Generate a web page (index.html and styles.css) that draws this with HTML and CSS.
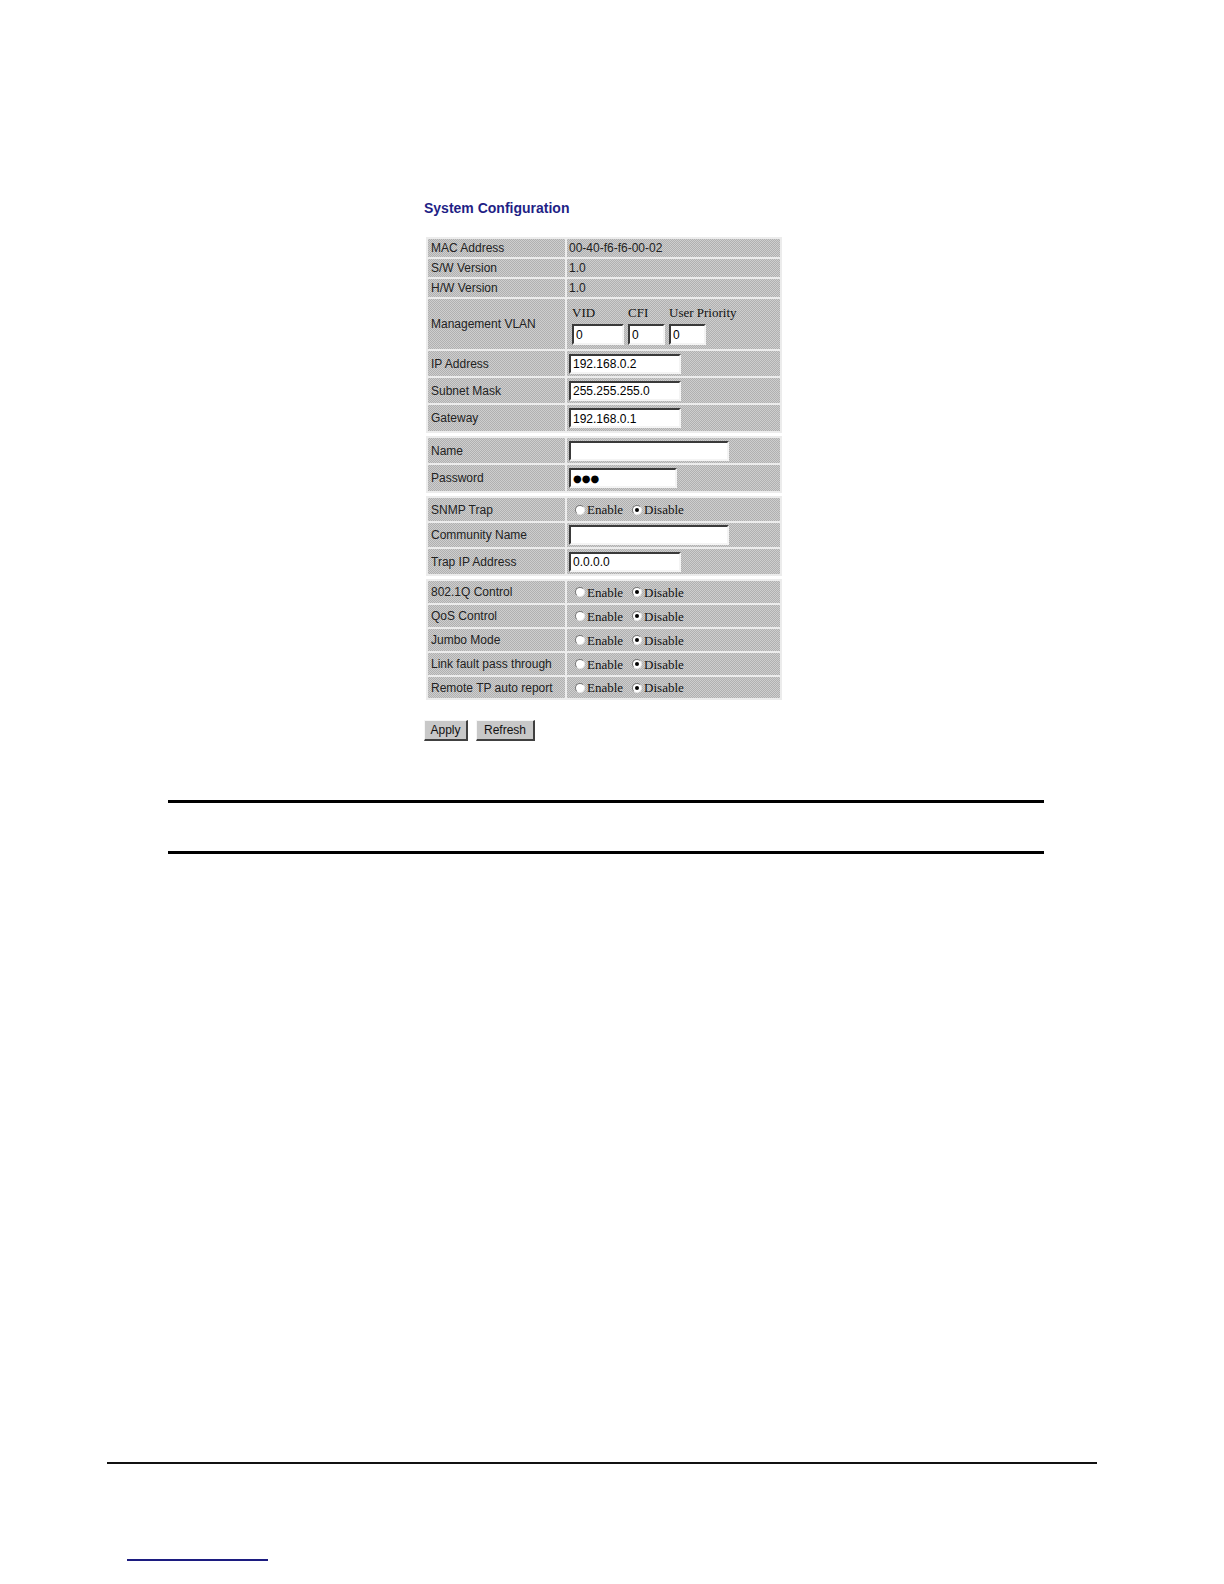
FILE: index.html
```html
<!DOCTYPE html>
<html>
<head>
<meta charset="utf-8">
<title>System Configuration</title>
<link rel="stylesheet" href="styles.css">
</head>
<body>
<div class="page">
  <div class="config">
    <h1 class="title">System Configuration</h1>
    <div class="tables">
      <table class="cfg">
        <tr class="r18"><td class="lab">MAC Address</td><td class="val">00-40-f6-f6-00-02</td></tr>
        <tr class="r18"><td class="lab">S/W Version</td><td class="val">1.0</td></tr>
        <tr class="r18"><td class="lab">H/W Version</td><td class="val">1.0</td></tr>
        <tr class="r50"><td class="lab">Management VLAN</td>
          <td class="val">
            <div class="vlan">
              <div class="vf vf-vid"><span class="serif">VID</span><input class="box" type="text" value="0"></div>
              <div class="vf vf-sm"><span class="serif">CFI</span><input class="box" type="text" value="0"></div>
              <div class="vf vf-sm"><span class="serif">User Priority</span><input class="box" type="text" value="0"></div>
            </div>
          </td></tr>
        <tr class="r25"><td class="lab">IP Address</td><td class="val"><input class="box w112" type="text" value="192.168.0.2"></td></tr>
        <tr class="r25"><td class="lab">Subnet Mask</td><td class="val"><input class="box w112" type="text" value="255.255.255.0"></td></tr>
        <tr class="r26"><td class="lab">Gateway</td><td class="val"><input class="box w112" type="text" value="192.168.0.1"></td></tr>
      </table>
      <table class="cfg">
        <tr class="r25"><td class="lab">Name</td><td class="val"><input class="box w160" type="text" value=""></td></tr>
        <tr class="r26"><td class="lab">Password</td><td class="val"><span class="box w108 pw">&#9679;&#9679;&#9679;</span></td></tr>
      </table>
      <table class="cfg">
        <tr class="r23"><td class="lab">SNMP Trap</td><td class="val"><div class="radios"><span class="rb"></span><span class="serif">Enable</span><span class="rb on"></span><span class="serif">Disable</span></div></td></tr>
        <tr class="r24"><td class="lab">Community Name</td><td class="val"><input class="box w160" type="text" value=""></td></tr>
        <tr class="r25"><td class="lab">Trap IP Address</td><td class="val"><input class="box w112" type="text" value="0.0.0.0"></td></tr>
      </table>
      <table class="cfg">
        <tr class="r22"><td class="lab">802.1Q Control</td><td class="val"><div class="radios"><span class="rb"></span><span class="serif">Enable</span><span class="rb on"></span><span class="serif">Disable</span></div></td></tr>
        <tr class="r22"><td class="lab">QoS Control</td><td class="val"><div class="radios"><span class="rb"></span><span class="serif">Enable</span><span class="rb on"></span><span class="serif">Disable</span></div></td></tr>
        <tr class="r22"><td class="lab">Jumbo Mode</td><td class="val"><div class="radios"><span class="rb"></span><span class="serif">Enable</span><span class="rb on"></span><span class="serif">Disable</span></div></td></tr>
        <tr class="r22"><td class="lab">Link fault pass through</td><td class="val"><div class="radios"><span class="rb"></span><span class="serif">Enable</span><span class="rb on"></span><span class="serif">Disable</span></div></td></tr>
        <tr class="r21"><td class="lab">Remote TP auto report</td><td class="val"><div class="radios"><span class="rb"></span><span class="serif">Enable</span><span class="rb on"></span><span class="serif">Disable</span></div></td></tr>
      </table>
    </div>
    <div class="buttons">
      <button class="btn btn-apply" type="button">Apply</button>
      <button class="btn btn-refresh" type="button">Refresh</button>
    </div>
  </div>
  <div class="rule rule-thick rule-1"></div>
  <div class="rule rule-thick rule-2"></div>
  <div class="rule rule-foot"></div>
  <div class="rule rule-link"></div>
</div>
</body>
</html>
```

FILE: styles.css
```css
html, body {
  margin: 0;
  padding: 0;
  background: #ffffff;
}

body {
  font-family: "Liberation Sans", Arial, sans-serif;
  font-size: 12px;
  color: #000;
}

.page {
  display: flow-root;
}

.config {
  margin-left: 424px;
  padding-top: 200px;
}

.title {
  margin: 0 0 21px 0;
  font-family: "Liberation Sans", Arial, sans-serif;
  font-size: 14px;
  line-height: 16px;
  font-weight: bold;
  color: #1f1f86;
}

.tables {
  display: flex;
  flex-direction: column;
  gap: 3px;
  margin-left: 2px;
}

.cfg {
  border-collapse: separate;
  border-spacing: 2px;
  width: 356px;
  background: #ececec;
  table-layout: fixed;
}

.cfg td {
  padding: 0;
  vertical-align: middle;
  background-color: #c0c0c0;
  background-image: repeating-conic-gradient(#b0b0b0 0 25%, #cecece 0 50%);
  background-size: 2px 2px;
  line-height: 14px;
  white-space: nowrap;
  overflow: visible;
}

.cfg td.lab {
  width: 134px;
  padding-left: 3px;
  color: #222;
}

.cfg td.val {
  padding-left: 2px;
  color: #222;
}

.r18 td { height: 18px; }
.r21 td { height: 21px; }
.r22 td { height: 22px; }
.r23 td { height: 23px; }
.r24 td { height: 24px; }
.r25 td { height: 25px; }
.r26 td { height: 26px; }
.r50 td { height: 50px; }

.serif {
  font-family: "Liberation Serif", "Times New Roman", serif;
  font-size: 13px;
  line-height: 15px;
  color: #111;
}

.box {
  display: inline-block;
  box-sizing: border-box;
  height: 20px;
  margin: 0;
  padding: 1px 2px 0 2px;
  border-style: solid;
  border-width: 2px;
  border-top-color: #3a3a3a;
  border-left-color: #3a3a3a;
  border-right-color: #f4f4f4;
  border-bottom-color: #f4f4f4;
  background: #ffffff;
  font-family: "Liberation Sans", Arial, sans-serif;
  font-size: 12px;
  line-height: 15px;
  color: #000;
  vertical-align: middle;
  outline: none;
}

.w112 { width: 112px; }
.w160 { width: 160px; }
.w108 { width: 108px; }

.pw {
  font-family: "DejaVu Sans", sans-serif;
  font-size: 10px;
  letter-spacing: 0;
  line-height: 16px;
}

.vlan {
  display: flex;
  gap: 4px;
  margin-left: 3px;
  padding-top: 2px;
}

.vf {
  display: flex;
  flex-direction: column;
  gap: 4px;
}

.vf .box { height: 21px; }
.vf-vid { width: 52px; }
.vf-vid .box { width: 52px; }
.vf-sm { width: 37px; }
.vf-sm .box { width: 37px; }

.radios {
  display: flex;
  align-items: center;
  margin-left: 6px;
}

.rb {
  box-sizing: border-box;
  width: 10px;
  height: 10px;
  border-radius: 50%;
  border: 1px solid #777;
  border-right-color: #e8e8e8;
  border-bottom-color: #e8e8e8;
  background: #ffffff;
  margin-right: 2px;
  position: relative;
}

.rb + .serif { margin-right: 9px; }

.rb.on::after {
  content: "";
  position: absolute;
  left: 2px;
  top: 2px;
  width: 4px;
  height: 4px;
  border-radius: 50%;
  background: #000;
}

.buttons {
  display: flex;
  gap: 8px;
  margin-top: 20px;
}

.btn {
  box-sizing: border-box;
  height: 21px;
  margin: 0;
  padding: 0;
  border-style: solid;
  border-width: 1px 2px 2px 1px;
  border-top-color: #f6f6f6;
  border-left-color: #f6f6f6;
  border-right-color: #404040;
  border-bottom-color: #404040;
  background: #c8c8c8;
  font-family: "Liberation Sans", Arial, sans-serif;
  font-size: 12px;
  color: #111;
}

.btn-apply { width: 44px; }
.btn-refresh { width: 59px; }

.rule {
  background: #000;
}

.rule-thick {
  height: 3px;
  width: 876px;
  margin-left: 168px;
}

.rule-1 { margin-top: 59px; }
.rule-2 { margin-top: 48px; }

.rule-foot {
  height: 2px;
  width: 990px;
  margin-left: 107px;
  margin-top: 608px;
  background: #111;
}

.rule-link {
  height: 2px;
  width: 141px;
  margin-left: 127px;
  margin-top: 95px;
  background: #1c1c80;
}
```
